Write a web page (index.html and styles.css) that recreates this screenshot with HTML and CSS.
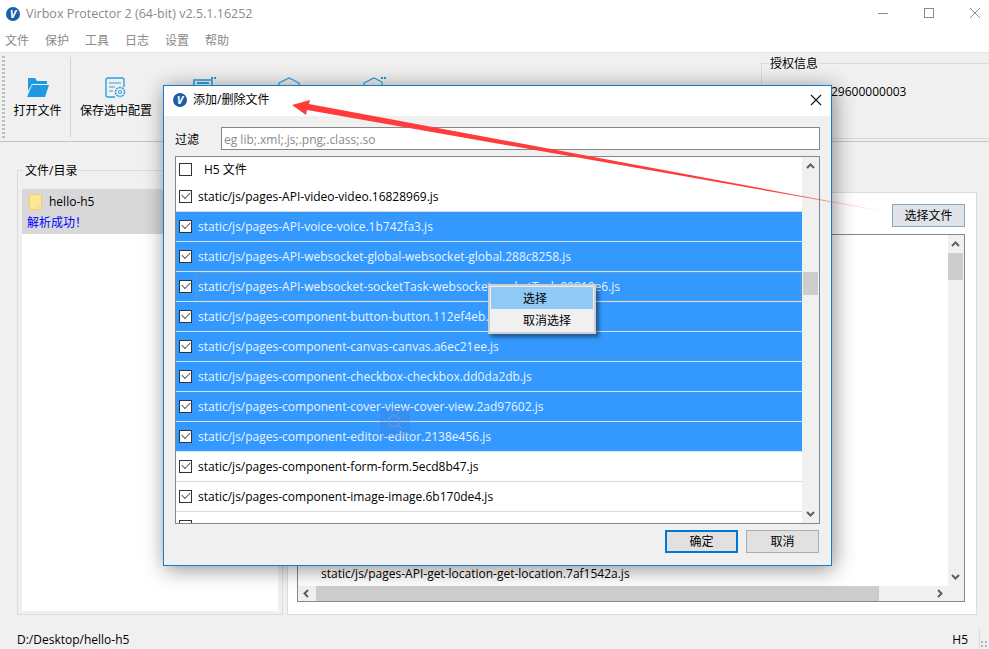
FILE: index.html
```html
<!DOCTYPE html>
<html lang="zh-CN">
<head>
    <meta charset="UTF-8">
    <title>Virbox Protector 2</title>
    <link rel="stylesheet" href="styles.css">
</head>
<body>
    <div class="titlebar">
        <span class="logo">V</span>
        <span class="app-title">Virbox Protector 2 (64-bit) v2.5.1.16252</span>
        <svg class="win-btn" width="12" height="12" viewBox="0 0 12 12"><path d="M1 6.500h10" stroke="#8a8a8a"/></svg>
        <svg class="win-btn" width="12" height="12" viewBox="0 0 12 12"><rect x="1.500" y="1.500" width="9" height="9" fill="none" stroke="#8a8a8a"/></svg>
        <svg class="win-btn" width="12" height="12" viewBox="0 0 12 12"><path d="M1 1l10 10M11 1L1 11" stroke="#8a8a8a"/></svg>
    </div>
    <div class="menubar">
        <span>文件</span><span>保护</span><span>工具</span><span>日志</span><span>设置</span><span>帮助</span>
    </div>

    <div class="toolbar">
        <div class="grip"></div>
        <div class="tool tool-first">
            <svg width="24" height="22" viewBox="0 0 24 22"><path d="M2 1h7l2 3h10v3H6L2 14z" fill="#1f9ae0"/><path d="M6 8h17l-4 12H1z" fill="#1f9ae0"/></svg>
            <span>打开文件</span>
        </div>
        <div class="tool-sep"></div>
        <div class="tool tool-second">
            <svg width="24" height="22" viewBox="0 0 24 22">
                <path d="M11 20H4a2 2 0 0 1-2-2V3a2 2 0 0 1 2-2h14a2 2 0 0 1 2 2v7" fill="none" stroke="#2d9fe3" stroke-width="1.400"/>
                <path d="M5 6h12M5 10h6M5 14h4" stroke="#2d9fe3" stroke-width="1.200"/>
                <circle cx="16" cy="15" r="4.500" fill="none" stroke="#2d9fe3" stroke-width="1.600" stroke-dasharray="2 .8"/>
                <circle cx="16" cy="15" r="1.600" fill="none" stroke="#2d9fe3"/>
            </svg>
            <span>保存选中配置</span>
        </div>
        <div class="tool">
            <svg width="24" height="22" viewBox="0 0 24 22"><rect x="2" y="3" width="18" height="16" fill="none" stroke="#2d9fe3" stroke-width="1.600"/><path d="M5 6h12" stroke="#2d9fe3" stroke-width="2"/><path d="M19 0h2v2h-2zM22 0h2v2h-2z" fill="#1f9ae0"/></svg>
        </div>
        <div class="tool">
            <svg width="24" height="22" viewBox="0 0 24 22"><path d="M2 6l10-5 10 5v10l-10 5-10-5z" fill="none" stroke="#2d9fe3" stroke-width="1.200"/></svg>
        </div>
        <div class="tool">
            <svg width="24" height="22" viewBox="0 0 24 22"><path d="M2 6l10-5 8 4v11l-8 5-10-5z" fill="none" stroke="#2d9fe3" stroke-width="1.200"/><path d="M19 0h2v2h-2zM22 0h2v2h-2z" fill="#1f9ae0"/></svg>
        </div>
        <fieldset class="license">
            <legend>授权信息</legend>
            <div class="license-no">29600000003</div>
        </fieldset>
    </div>

    <div class="main">
        <fieldset class="files">
            <legend>文件/目录</legend>
            <div class="tree">
                <div class="tree-item">
                    <div class="tree-name">
                        <svg width="13" height="16" viewBox="0 0 13 16"><path d="M.5.5h12v15H.5z" fill="#ffe596" stroke="#f0cf6e"/><path d="M9 12h3.500v3.500H9z" fill="#fff3c8" stroke="#f0cf6e"/></svg>
                        hello-h5
                    </div>
                    <div class="tree-status">解析成功！</div>
                </div>
            </div>
        </fieldset>
        <div class="panel">
            <div class="panel-head"><button class="pick-btn">选择文件</button></div>
            <div class="log">
                <div class="log-body">
                    <div class="log-text">
                        <div class="log-line">static/js/pages-API-get-location-get-location.7af1542a.js</div>
                    </div>
                    <div class="log-vbar">
                        <svg class="arrow" width="15" height="18" viewBox="0 0 15 18"><path d="M4 11l3.500-3.500L11 11" fill="none" stroke="#606060" stroke-width="2"/></svg>
                        <div class="log-vthumb"></div>
                        <svg class="arrow arrow-end" width="15" height="18" viewBox="0 0 15 18"><path d="M4 7l3.500 3.500L11 7" fill="none" stroke="#606060" stroke-width="2"/></svg>
                    </div>
                </div>
                <div class="log-hbar">
                    <svg width="18" height="15" viewBox="0 0 18 15"><path d="M10 4l-3.500 3.500L10 11" fill="none" stroke="#606060" stroke-width="2"/></svg>
                    <div class="log-hthumb"></div>
                    <svg class="arrow-end-h" width="18" height="15" viewBox="0 0 18 15"><path d="M8 4l3.500 3.500L8 11" fill="none" stroke="#606060" stroke-width="2"/></svg>
                </div>
            </div>
        </div>
    </div>

    <div class="statusbar">
        <span class="status-path">D:/Desktop/hello-h5</span>
        <span class="status-type">H5</span>
        <span class="status-sep"></span>
        <span class="status-grip"></span>
    </div>

    <!-- add / remove dialog -->
    <div class="dialog">
        <div class="dialog-title">
            <span class="logo">V</span>
            <span class="dialog-name">添加/删除文件</span>
            <svg class="dialog-close" width="12" height="12" viewBox="0 0 12 12"><path d="M1 1l10 10M11 1L1 11" stroke="#111" stroke-width="1.100"/></svg>
        </div>
        <div class="dialog-body">
            <div class="filter">
                <label>过滤</label>
                <input type="text" placeholder="eg lib;.xml;.js;.png;.class;.so">
            </div>
            <div class="list">
                <div class="rows">
                    <div class="list-head"><span class="check"></span><span>H5 文件</span></div>
                    <div class="row"><span class="check on"></span>static/js/pages-API-video-video.16828969.js</div>
                    <div class="row sel"><span class="check on"></span>static/js/pages-API-voice-voice.1b742fa3.js</div>
                    <div class="row sel"><span class="check on"></span>static/js/pages-API-websocket-global-websocket-global.288c8258.js</div>
                    <div class="row sel"><span class="check on"></span><span class="row-text">static/js/pages-API-websocket-socketTask-websocket-socketTask.00810e6.js</span></div>
                    <div class="row sel"><span class="check on"></span>static/js/pages-component-button-button.112ef4eb.js</div>
                    <div class="row sel"><span class="check on"></span>static/js/pages-component-canvas-canvas.a6ec21ee.js</div>
                    <div class="row sel"><span class="check on"></span>static/js/pages-component-checkbox-checkbox.dd0da2db.js</div>
                    <div class="row sel"><span class="check on"></span>static/js/pages-component-cover-view-cover-view.2ad97602.js</div>
                    <div class="row sel"><span class="check on"></span>static/js/pages-component-editor-editor.2138e456.js</div>
                    <div class="row"><span class="check on"></span>static/js/pages-component-form-form.5ecd8b47.js</div>
                    <div class="row"><span class="check on"></span>static/js/pages-component-image-image.6b170de4.js</div>
                    <div class="row"><span class="check on"></span></div>
                </div>
                <div class="list-bar">
                    <svg width="17" height="18" viewBox="0 0 17 18"><path d="M5 11l3.500-3.500L12 11" fill="none" stroke="#606060" stroke-width="2"/></svg>
                    <div class="list-thumb"></div>
                    <svg class="arrow-end" width="17" height="18" viewBox="0 0 17 18"><path d="M5 7l3.500 3.500L12 7" fill="none" stroke="#606060" stroke-width="2"/></svg>
                </div>
            </div>
            <div class="dialog-btns">
                <button class="btn btn-default">确定</button>
                <button class="btn">取消</button>
            </div>
        </div>
    </div>

    <div class="busy">
        <svg width="18" height="18" viewBox="0 0 18 18"><circle cx="8" cy="8" r="5.500" fill="none" stroke="#6f9cf0" stroke-width="2"/><path d="M12 12l4 4" stroke="#6f9cf0" stroke-width="2"/></svg>
    </div>

    <div class="context-menu">
        <div class="menu-item hot">选择</div>
        <div class="menu-item">取消选择</div>
    </div>

    <svg class="annotation" width="989" height="649" viewBox="0 0 989 649">
        <defs>
            <linearGradient id="tail" x1="292" y1="105" x2="888" y2="212" gradientUnits="userSpaceOnUse">
                <stop offset="0.8" stop-color="#ff3b3b"/>
                <stop offset="1" stop-color="#ff3b3b" stop-opacity="0.25"/>
            </linearGradient>
        </defs>
        <polygon points="292,105 310,100 309,104 888,212 307,110 306,115" fill="url(#tail)"/>
    </svg>
</body>
</html>
```

FILE: styles.css
```css
* { box-sizing: border-box; }

html, body { margin: 0; height: 100%; }

body {
    position: relative;
    width: 989px;
    height: 649px;
    overflow: hidden;
    display: flex;
    flex-direction: column;
    background: #f0f0f0;
    color: #000;
    font-family: "Open Sans", "Noto Sans CJK SC", sans-serif;
    font-size: 12px;
    line-height: 16px;
}

.logo {
    width: 14px;
    height: 14px;
    border-radius: 50%;
    background: #1c5fa8;
    color: #fff;
    font-size: 11px;
    font-weight: 700;
    font-style: italic;
    line-height: 14px;
    text-align: center;
    flex: none;
}

/* window chrome */
.titlebar {
    height: 32px;
    flex: none;
    display: flex;
    align-items: center;
    padding: 0 8px 4px 6px;
    background: #fff;
}
.app-title { margin-left: 6px; margin-right: auto; color: #8a8a8a; font-size: 12.500px; }
.win-btn { margin-left: 34px; margin-bottom: 2px; }

.menubar {
    height: 21px;
    flex: none;
    display: flex;
    gap: 16px;
    padding: 1px 5px 0;
    background: #fff;
    color: #8a8a8a;
    border-bottom: 1px solid #e6e6e6;
}

.toolbar {
    height: 89px;
    flex: none;
    display: flex;
    overflow: hidden;
    border-bottom: 1px solid #c4c4c4;
}
.grip {
    width: 3px;
    margin: 3px 0 3px 2px;
    flex: none;
    background: repeating-linear-gradient(#bdbdbd 0 2px, transparent 2px 4px);
}
.tool {
    width: 85px;
    flex: none;
    display: flex;
    flex-direction: column;
    align-items: center;
    gap: 4px;
    padding-top: 24px;
}
.tool-first { width: 65px; }
.tool-second { width: 90px; }
.tool-sep { width: 1px; margin: 4px 0; flex: none; background: #d2d2d2; }
.license {
    width: 240px;
    height: 85px;
    margin: 1px -12px 0 auto;
    padding: 0 0 0 69px;
    border: 1px solid #d9d9d9;
    min-width: 0;
}
.license legend { margin-left: -62px; padding: 2px 1px 0; line-height: 16px; }
.license-no { margin-top: 12px; }

/* main panes */
.main { flex: 1; min-height: 0; display: flex; gap: 4px; padding: 19px 12px 0 17px; }
.files {
    width: 266px;
    flex: none;
    margin: 0;
    padding: 10px 4px 3px;
    border: 1px solid #dcdcdc;
    min-width: 0;
}
.files legend { margin-left: 2px; padding: 2px 1px 0; line-height: 16px; }
.tree { height: 100%; background: #fff; }
.tree-item { height: 45px; background: #d8d8d8; padding-top: 4px; }
.tree-name { display: flex; align-items: center; gap: 7px; height: 17px; padding-left: 7px; }
.tree-status { margin-top: 4px; padding-left: 5px; color: #0000ff; font-family: "Noto Sans CJK TC", sans-serif; }

.panel {
    flex: 1;
    margin-top: 31px;
    display: flex;
    flex-direction: column;
    padding: 11px 11px 12px 9px;
    background: #fff;
    border: 1px solid #dcdcdc;
}
.panel-head { display: flex; justify-content: flex-end; margin-bottom: 7px; }
.pick-btn {
    width: 73px;
    height: 23px;
    padding: 0;
    font: inherit;
    background: #dfe3e8;
    border: 1px solid #8fa6b8;
}
.log { flex: 1; min-height: 0; display: flex; flex-direction: column; border: 1px solid #888; background: #f0f0f0; }
.log-body { flex: 1; min-height: 0; display: flex; }
.log-text { flex: 1; display: flex; flex-direction: column; justify-content: flex-end; background: #fff; padding: 0 0 4px 23px; }
.log-vbar { width: 16px; display: flex; flex-direction: column; }
.log-vthumb { height: 27px; width: 15px; background: #cdcdcd; }
.arrow-end { margin-top: auto; }
.log-hbar { height: 15px; flex: none; display: flex; }
.log-hthumb { width: 563px; background: #cdcdcd; }
.arrow-end-h { margin-left: auto; margin-right: 16px; }

.statusbar { height: 34px; flex: none; display: flex; align-items: flex-end; padding: 0 0 1px 17px; }
.status-path { margin-right: auto; }
.status-sep { width: 1px; height: 21px; margin: 0 0 -1px 11px; background: #dcdcdc; }
.status-grip {
    width: 9px;
    height: 8px;
    background: radial-gradient(circle, #b5b5b5 1px, transparent 1.200px) 0 0 / 4px 4px;
}

/* dialog, lies over the main window */
.dialog {
    position: absolute;
    left: 163px;
    top: 85px;
    width: 669px;
    height: 481px;
    display: flex;
    flex-direction: column;
    background: #f0f0f0;
    border: 1px solid #1a7cc8;
    box-shadow: 2px 3px 20px rgba(0, 0, 0, .45);
}
.dialog-title { height: 30px; flex: none; display: flex; align-items: center; padding: 0 9px 2px 9px; background: #fff; }
.dialog-name { margin-left: 6px; margin-right: auto; }
.dialog-body { flex: 1; min-height: 0; padding: 11px 11px 12px; display: flex; flex-direction: column; }
.filter { display: flex; align-items: center; height: 23px; margin-bottom: 6px; }
.filter label { width: 46px; flex: none; padding-top: 2px; }
.filter input {
    flex: 1;
    height: 23px;
    padding: 2px 2px 0;
    font: inherit;
    background: #fff;
    border: 1px solid #868686;
    border-radius: 0;
    outline: none;
}
.filter input::placeholder { color: #8a8a8a; }

.list { flex: 1; min-height: 0; display: flex; border: 1px solid #868686; background: #fff; }
.rows { flex: 1; min-width: 0; overflow: hidden; }
.list-head { height: 25px; display: flex; align-items: center; gap: 12px; padding: 0 0 0 3px; }
.row {
    height: 30px;
    display: flex;
    align-items: center;
    gap: 6px;
    padding-left: 3px;
    border-bottom: 1px solid #d9d9d9;
}
.row.sel { background: #3399ff; color: #e9f4ff; border-bottom-color: #cfe5fc; }
/* keyboard focus on the current row */
.row-text {
    flex: 1;
    align-self: stretch;
    display: flex;
    align-items: center;
    margin-left: -2px;
    margin-right: 1px;
    padding-left: 1px;
    border: 1px dotted rgba(208, 143, 78, .6);
}
.check {
    position: relative;
    width: 13px;
    height: 13px;
    flex: none;
    background: #fff;
    border: 1px solid #333;
}
.check.on::after {
    content: "";
    position: absolute;
    left: 2px;
    top: 1px;
    width: 7px;
    height: 4px;
    border-left: 1.500px solid #555;
    border-bottom: 1.500px solid #555;
    transform: rotate(-45deg);
}
.list-bar { width: 17px; flex: none; display: flex; flex-direction: column; align-items: center; background: #f0f0f0; }
.list-thumb { width: 15px; height: 23px; margin-top: 97px; background: #cdcdcd; }

.dialog-btns { display: flex; justify-content: flex-end; gap: 8px; margin: 6px 1px 0 0; }
.btn { width: 73px; height: 23px; padding: 0; font: inherit; background: #e1e1e1; border: 1px solid #adadad; }
.btn-default { border: 2px solid #0078d7; }

.busy {
    position: absolute;
    left: 380px;
    top: 408px;
    width: 30px;
    height: 28px;
    display: flex;
    align-items: center;
    justify-content: center;
    border-radius: 3px;
    background: rgba(70, 110, 200, .2);
}
.busy svg { opacity: .5; }

.context-menu {
    position: absolute;
    left: 488px;
    top: 284px;
    width: 108px;
    height: 50px;
    padding: 1px;
    background: #f0f0f0;
    border: 2px solid #cfcfcf;
    box-shadow: 3px 3px 4px rgba(0, 0, 0, .45);
}
.menu-item { height: 22px; line-height: 24px; padding-left: 32px; }
.menu-item.hot { background: #90c8f6; }

.annotation { position: absolute; left: 0; top: 0; pointer-events: none; }
```
